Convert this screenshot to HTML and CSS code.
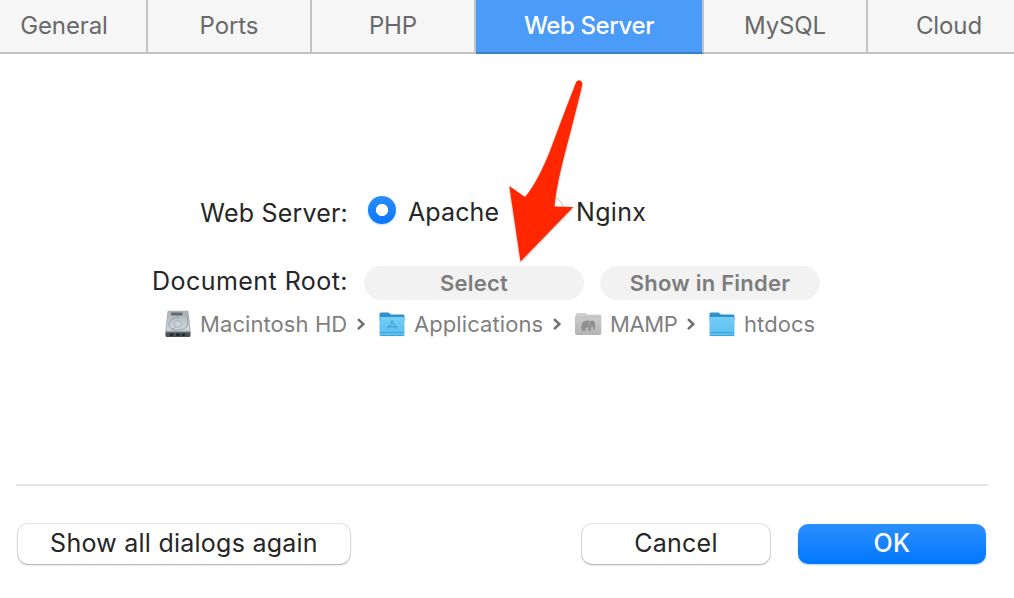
FILE: index.html
```html
<!DOCTYPE html>
<html lang="en">
<head>
<meta charset="utf-8">
<title>Preferences</title>
<link rel="stylesheet" href="styles.css">
</head>
<body>
<main class="window">
  <nav class="tabs">
    <a class="tab">General</a>
    <a class="tab">Ports</a>
    <a class="tab">PHP</a>
    <a class="tab tab-active">Web Server</a>
    <a class="tab">MySQL</a>
    <a class="tab">Cloud</a>
  </nav>

  <section class="settings">
    <div class="row server-row">
      <span class="label">Web Server:</span>
      <label class="option"><span class="radio radio-on"></span><span class="apache">Apache</span></label>
      <label class="option option-nginx"><span class="radio"></span><span class="nginx">Nginx</span></label>
    </div>
    <div class="row root-row">
      <span class="label root-label">Document Root:</span>
      <button class="pill select">Select</button>
      <button class="pill finder">Show in Finder</button>
    </div>
    <div class="path">
      <svg class="icon" width="28" height="28" viewBox="0 0 28 28">
        <defs><linearGradient id="disk" x2="0" y2="1"><stop stop-color="#a9b3b9"/><stop offset="1" stop-color="#d3dade"/></linearGradient></defs>
        <path d="M4 1.200h20l2.200 20H1.800z" fill="url(#disk)" stroke="#9aa4a9" stroke-width=".8"/>
        <path d="M1.500 21.500h25V25.500q0 1.500-1.500 1.500H3q-1.500 0-1.500-1.500z" fill="#485156"/>
        <path d="M2 21.800h24" stroke="#a0abb0" stroke-width="1"/>
        <path d="M6 24.700h3M12 24.700h4M18 24.700h3" stroke="#23292c" stroke-width="2.400"/>
        <rect x="7" y="2.500" width="11.500" height="3" fill="#626c72"/>
        <path d="M20.500 4q4 3 3.300 9t-7 6.500Q9 21.500 6 17.500T8 9.500q3-3 8-2.500" fill="none" stroke="#8a969c" stroke-width=".8"/>
        <circle cx="14" cy="14" r="3.400" fill="#cdd5da" stroke="#98a4aa" stroke-width=".7"/>
        <path d="M11.500 17l-4 3" stroke="#8a969c" stroke-width=".8"/>
      </svg>
      <span class="crumb macintosh">Macintosh HD</span>
      <svg class="chevron" width="8" height="14" viewBox="0 0 8 14"><path d="M1 2.200L6.300 7.200 1 12.200"/></svg>
      <svg class="icon" width="28" height="28" viewBox="0 0 28 28">
        <defs><linearGradient id="folder" x2="0" y2="1"><stop stop-color="#76cdf8"/><stop offset="1" stop-color="#5abdf0"/></linearGradient></defs>
        <path d="M1.500 4q0-1.500 1.500-1.500h7.500L13 4.500h12q1.500 0 1.500 1.500v5h-25z" fill="#2e91c9"/>
        <rect x="1.500" y="7" width="25" height="19" rx="1.300" fill="url(#folder)"/>
        <path d="M2 22.500h24M2 25.600h24" stroke="#389bcf" stroke-width=".8"/>
        <path d="M14.800 10.500L10 18.500M13.200 10.500l5 8M8.500 16.700h11" fill="none" stroke="#3f9fd3" stroke-width="1.100"/>
      </svg>
      <span class="crumb applications">Applications</span>
      <svg class="chevron" width="8" height="14" viewBox="0 0 8 14"><path d="M1 2.200L6.300 7.200 1 12.200"/></svg>
      <svg class="icon" width="28" height="28" viewBox="0 0 28 28">
        <defs><linearGradient id="gray" x2="0" y2="1"><stop stop-color="#d0d0d0"/><stop offset="1" stop-color="#b4b4b4"/></linearGradient></defs>
        <path d="M2 4.500q0-1.500 1.500-1.500h7.700q1.200 0 1.300 1.500H26q1.300 0 1.300 1.500v17q0 2-1.500 2H2.500Q1 25 1 23V6.500q0-1 1-1z" fill="url(#gray)"/>
        <path d="M1.500 7h25.300" stroke="#bdbdbd" stroke-width=".8"/>
        <path d="M8 20.500q-1-1-.5-5 .7-5 6-5 2 0 3 .5 3-1.500 4.300 1.500.8 2 .2 7h-1.700l-.2-3-2 1-.6 3.500h-2l-.5-3.500h-2l-.6 3.500H9z" fill="#909090"/>
        <path d="M16 11.500q-2 4 1 4" fill="none" stroke="#b5b5b5" stroke-width=".7"/>
      </svg>
      <span class="crumb mamp">MAMP</span>
      <svg class="chevron" width="8" height="14" viewBox="0 0 8 14"><path d="M1 2.200L6.300 7.200 1 12.200"/></svg>
      <svg class="icon" width="28" height="28" viewBox="0 0 28 28">
        <path d="M1.500 4q0-1.500 1.500-1.500h7.500L13 4.500h12q1.500 0 1.500 1.500v5h-25z" fill="#2e91c9"/>
        <rect x="1.500" y="7" width="25" height="19" rx="1.300" fill="url(#folder)"/>
        <path d="M2 22.500h24M2 25.600h24" stroke="#389bcf" stroke-width=".8"/>
      </svg>
      <span class="crumb htdocs">htdocs</span>
    </div>
  </section>

  <footer class="footer">
    <button class="button dialogs">Show all dialogs again</button>
    <button class="button cancel">Cancel</button>
    <button class="button ok">OK</button>
  </footer>

  <svg class="arrow" width="80" height="194" viewBox="500 74 80 194">
    <path d="M576.200 82Q579 78.500 582 82.200Q582.500 84 581.500 88Q575 115 566 149Q556 187 554.500 206.500L573.300 207L520.500 261.500L509.300 186L525 197Q537 183 550 151Q561 121 576.200 82Z" fill="#ff2600"/>
  </svg>
</main>
</body>
</html>
```
FILE: styles.css
```css
* { box-sizing: border-box; }
body {
  margin: 0;
  background: #fff;
  color: #262626;
  font-family: Inter, "Liberation Sans", sans-serif;
}
.window {
  position: relative;
  width: 1014px;
  height: 598px;
  overflow: hidden;
}
.tabs {
  display: flex;
  width: 1050px;
  height: 54px;
  margin-left: -18px;
}
.tab {
  flex: 0 0 164px;
  padding-top: 11px;
  background: #f6f6f6;
  border-right: 2px solid #c3c3c3;
  border-bottom: 2px solid #c3c3c3;
  color: #696969;
  font-size: 24px;
  line-height: 30px;
  letter-spacing: -.1px;
  text-align: center;
  white-space: nowrap;
}
.tab:first-child { flex-basis: 166px; }
.tab-active {
  flex-basis: 228px;
  background: #4b9bf8;
  color: #fff;
  font-weight: 500;
  letter-spacing: -.4px;
  border-bottom-color: #3d7ec9;
}
.settings { height: 430px; padding-top: 139px; }
.row, .path, .option, .footer { display: flex; align-items: center; }
.row { font-size: 25px; line-height: 32px; white-space: nowrap; }
.label { width: 348px; text-align: right; letter-spacing: .2px; }
.root-label { padding-bottom: 4px; letter-spacing: .45px; }
.server-row { height: 40px; }
.option { height: 40px; margin-left: 20px; padding-bottom: 2px; gap: 12px; }
.radio {
  width: 28px;
  height: 28px;
  margin-bottom: 4px;
  border: 1px solid #c0c0c0;
  border-radius: 50%;
}
.radio-on {
  border: 0;
  background: radial-gradient(circle, #fff 0 5.700px, transparent 6.500px), linear-gradient(#2c8dff, #0877ff);
  box-shadow: 0 1px 2px #007aff40;
}
.apache { letter-spacing: .1px; }
.nginx { letter-spacing: .3px; }
.option-nginx { margin-left: 37px; }
.root-row { height: 36px; margin-top: 32px; }
.pill {
  width: 220px;
  height: 34px;
  margin: 0 0 0 16px;
  padding: 0;
  border: 0;
  border-radius: 17px;
  background: #f2f2f2;
  color: #7d7d7d;
  font: 600 22px/34px Inter, "Liberation Sans", sans-serif;
  letter-spacing: .22px;
}
.path {
  height: 32px;
  margin: 7px 0 0 164px;
  color: #7f7f7f;
  font-size: 22px;
  line-height: 30px;
  letter-spacing: .08px;
  white-space: nowrap;
}
.crumb { flex: none; margin-left: 8px; }
.icon, .chevron { flex: none; }
.chevron { fill: none; stroke: #6e6e6e; stroke-width: 2.500; }
.macintosh { width: 157px; }
.applications { width: 139px; }
.mamp { width: 77px; letter-spacing: -.4px; }
.chevron + .icon { margin-left: 13px; }
.footer {
  margin: 1px 26px 0 16px;
  margin-top: 0;
  padding-top: 38px;
  border-top: 2px solid #e4e4e4;
  align-items: flex-start;
}
.button {
  height: 40px;
  margin: 0;
  padding: 0 0 2px;
  border: 0;
  border-radius: 10px;
  background: #fff;
  box-shadow: 0 0 0 1px #00000018, 0 1px 2px #00000045;
  color: #262626;
  font: 25px/36px Inter, "Liberation Sans", sans-serif;
  letter-spacing: .25px;
  white-space: nowrap;
}
.dialogs { width: 332px; margin-left: 2px; }
.cancel { width: 188px; margin-left: 232px; }
.ok {
  width: 188px;
  margin-left: 28px;
  background: linear-gradient(#2c8fff, #0077ff);
  box-shadow: 0 1px 2px #007aff50;
  color: #fff;
  font-weight: 500;
}
.arrow {
  position: absolute;
  left: 500px;
  top: 74px;
  overflow: visible;
  filter: drop-shadow(0 1px 1px #0000004d);
}
```
